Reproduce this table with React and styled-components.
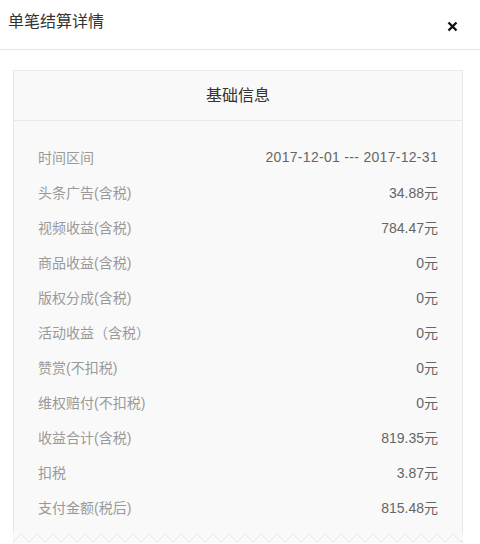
import React from "react";
import styled, { createGlobalStyle } from "styled-components";

const rows = [
  ["时间区间", "2017-12-01 --- 2017-12-31", true],
  ["头条广告(含税)", "34.88元"],
  ["视频收益(含税)", "784.47元"],
  ["商品收益(含税)", "0元"],
  ["版权分成(含税)", "0元"],
  ["活动收益（含税）", "0元"],
  ["赞赏(不扣税)", "0元"],
  ["维权赔付(不扣税)", "0元"],
  ["收益合计(含税)", "819.35元"],
  ["扣税", "3.87元"],
  ["支付金额(税后)", "815.48元"],
];

const App = () => {
  return (
    <>
      <GlobalStyle />
      <Page>
        <Header>
          <Title>单笔结算详情</Title>
          <Close aria-label="close">
            <svg width="11" height="11" viewBox="0 0 11 11">
              <path d="M1.5 1.5 L9.5 9.5 M9.5 1.5 L1.5 9.5" stroke="#111" strokeWidth="2.4" />
            </svg>
          </Close>
        </Header>

        <Card>
          <CardHead>基础信息</CardHead>
          <CardBody>
            {rows.map(([label, value, wide]) => (
              <Row key={label}>
                <Label>{label}</Label>
                <Value $wide={wide}>{value}</Value>
              </Row>
            ))}
          </CardBody>
          <Zigzag />
        </Card>
      </Page>
    </>
  );
};

export default App;

const GlobalStyle = createGlobalStyle`
  body {
    margin: 0;
    background: #fff;
    font-family: "Liberation Sans", "Noto Sans CJK SC", sans-serif;
  }
`;

const Page = styled.div`
  width: 480px;
  height: 544px;
  overflow: hidden;
`;

const Header = styled.div`
  display: flex;
  justify-content: space-between;
  align-items: flex-start;
  height: 50px;
  padding: 12px 22px 0 8px;
  box-sizing: border-box;
  border-bottom: 1px solid #e6e6e6;
`;

const Title = styled.div`
  font-size: 16px;
  line-height: 20px;
  color: #333;
`;

const Close = styled.div`
  margin-top: 9px;
  width: 11px;
  height: 11px;
  display: flex;
`;

const Card = styled.div`
  position: relative;
  margin: 20px 17px 0 13px;
  background: #f9f9f9;
  border: 1px solid #e8e8e8;
  border-bottom: none;
`;

const CardHead = styled.div`
  height: 49px;
  line-height: 49px;
  text-align: center;
  font-size: 16px;
  color: #333;
  border-bottom: 1px solid #e8e8e8;
`;

const CardBody = styled.div`
  padding: 18px 24px 9px 24px;
`;

const Row = styled.div`
  display: flex;
  justify-content: space-between;
  align-items: center;
  height: 35px;
  font-size: 14px;
`;

const Label = styled.span`
  color: #999;
`;

const Value = styled.span`
  color: #666;
  letter-spacing: ${(p) => (p.$wide ? "0.3px" : "0")};
`;

const Zigzag = styled.div`
  height: 10px;
  margin: 0 -1px;
  background:
    linear-gradient(135deg, #f9f9f9 6px, transparent 6px) 0 0 / 16px 10px repeat-x,
    linear-gradient(225deg, #f9f9f9 6px, transparent 6px) 0 0 / 16px 10px repeat-x,
    linear-gradient(135deg, #e8e8e8 7px, transparent 7px) 0 0 / 16px 10px repeat-x,
    linear-gradient(225deg, #e8e8e8 7px, transparent 7px) 0 0 / 16px 10px repeat-x;
`;
